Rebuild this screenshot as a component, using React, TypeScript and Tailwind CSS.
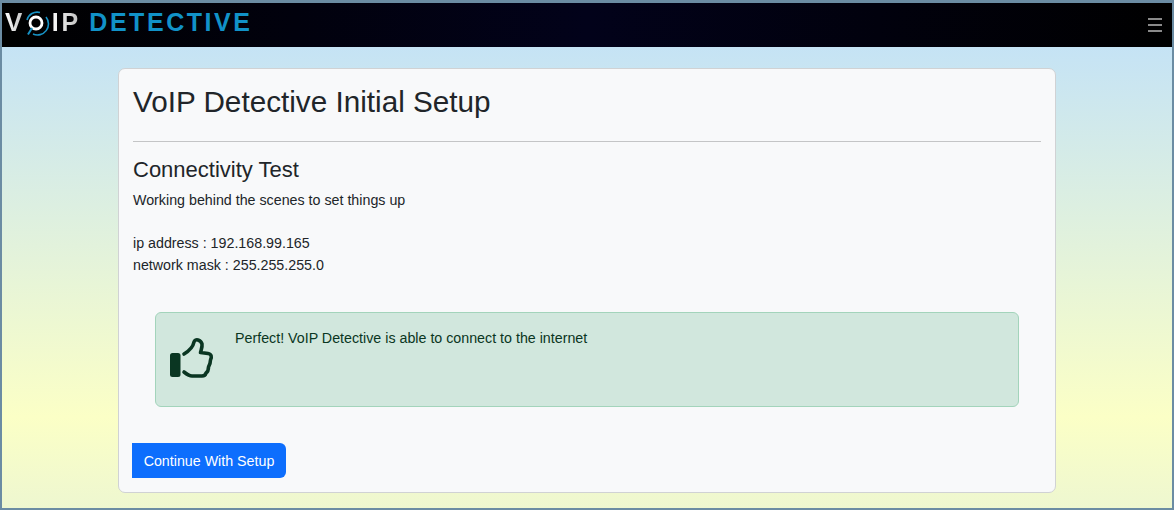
export default function App() {
  return (
    <div className="h-[510px] w-[1174px] overflow-hidden border-2 border-t-[3px] border-[#6b8ca3] bg-[linear-gradient(to_bottom,#c5e3f5_8.7%,#fbffc6_82%,#eef7d0_100%)] font-['Liberation_Sans',Arial,sans-serif] text-[#212529]">
      <nav className="flex h-[44px] items-center justify-between bg-[linear-gradient(to_right,#000000,#02021a_50%,#000000)] pl-[3px] pr-[10px]">
        <div className="flex items-center pb-[6px] text-[25px] font-bold leading-none tracking-[2.3px]">
          <span className="bg-[linear-gradient(to_right,#ffffff,#bdbdbd)] bg-clip-text text-[26px] text-transparent">V</span>
          <svg viewBox="0 0 28 28" className="ml-[-3px] h-[28px] w-[28px]" fill="none">
            <circle cx="14" cy="15" r="6" stroke="#ffffff" strokeWidth="2.8" />
            <path d="M10 20 L6 26.5" stroke="#1793c6" strokeWidth="2" />
            <path d="M5 12 A10.5 10.5 0 0 1 18 4.5" stroke="#1793c6" strokeWidth="1.6" />
            <path d="M24 9 A11 11 0 0 1 11 26" stroke="#1793c6" strokeWidth="1.6" />
          </svg>
          <span className="bg-[linear-gradient(to_right,#ffffff,#bdbdbd)] bg-clip-text pl-[2px] tracking-[3px] text-transparent">IP</span>
          <span className="ml-[8px] tracking-[2.55px] text-[#1192c8]">DETECTIVE</span>
        </div>
        <div className="flex w-[14px] flex-col gap-[4px]">
          <span className="h-[2px] bg-[#8a8a8a]" />
          <span className="h-[2px] bg-[#8a8a8a]" />
          <span className="h-[2px] bg-[#8a8a8a]" />
        </div>
      </nav>
      <main className="flex justify-center pt-[21px]">
        <div className="h-[425px] w-[938px] rounded-[7px] border border-[#d0d2d4] bg-[#f8f9fa] px-[14px] pt-[14px]">
          <h1 className="text-[29.7px] leading-[38px]">VoIP Detective Initial Setup</h1>
          <hr className="mt-[20px] border-[#c4c5c6]" />
          <h2 className="mt-[15px] text-[22px] leading-[26px] font-medium">Connectivity Test</h2>
          <p className="mt-[7px] text-[14.25px] leading-[21px]">Working behind the scenes to set things up</p>
          <p className="mt-[21px] text-[14.25px] leading-[22px]">ip address : 192.168.99.165</p>
          <p className="text-[14.25px] leading-[22px]">network mask : 255.255.255.0</p>
          <div className="mx-[22px] mt-[36px] flex h-[95px] rounded-[6px] border border-[#a3d4bb] bg-[#d1e7dd] pl-[12px] pt-[15px] text-[#0a3622]">
            <svg viewBox="0 0 46 44" className="mt-[9px] h-[44px] w-[46px]" fill="none">
              <rect x="2" y="16" width="10.5" height="24" rx="2.5" fill="#0a3622" />
              <path
                d="M16 17 C21 14 25 10 26 5 C27 1 33 3 34 7 C34.5 10 33 13 32.5 15.5 L40 16.5 C43.5 17 44 20 42.5 23 C42.5 26 41.5 28 40.5 30 C40.5 33 39.5 35 38 36 C37.5 38 36 39 34 39 L24 39 C21 39 18.5 37 16 35"
                stroke="#0a3622"
                strokeWidth="3.6"
                strokeLinecap="round"
                strokeLinejoin="round"
              />
            </svg>
            <p className="ml-[21px] text-[14.25px] leading-[21px]">Perfect! VoIP Detective is able to connect to the internet</p>
          </div>
          <button className="ml-[-1px] mt-[36px] h-[35px] w-[154px] rounded-r-[6px] bg-[#0d6efd] pt-[2px] text-[14.25px] text-white">
            Continue With Setup
          </button>
        </div>
      </main>
    </div>
  );
}
